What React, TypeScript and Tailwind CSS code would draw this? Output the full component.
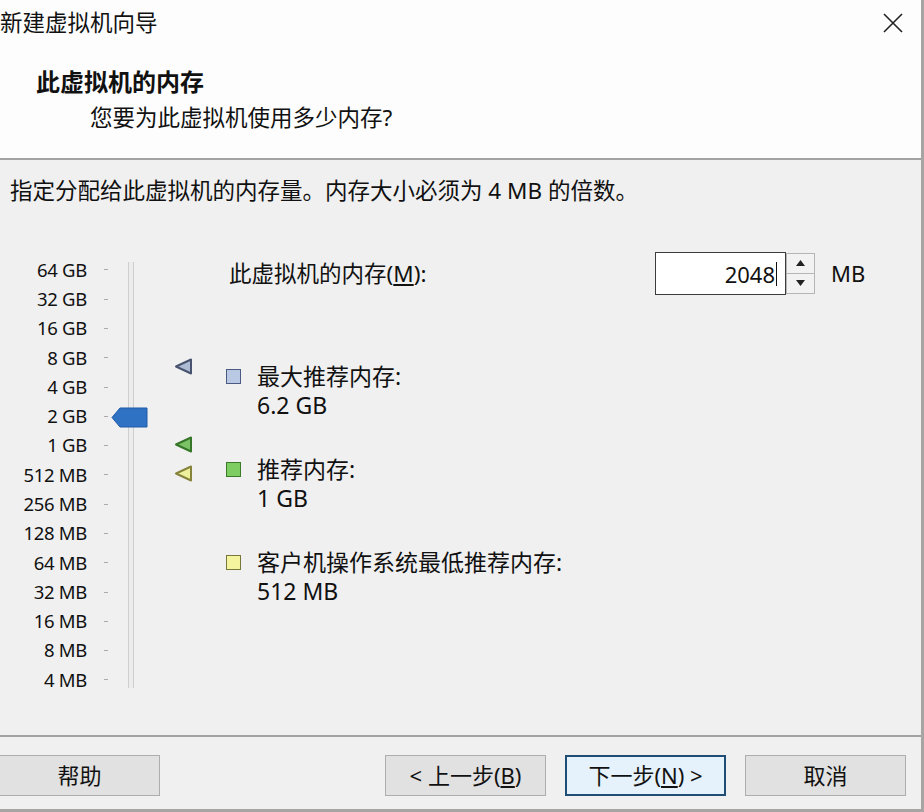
import React from 'react';

const FONT = { fontFamily: '"Noto Sans", "Noto Sans CJK SC", sans-serif' };

const scale = ['64 GB', '32 GB', '16 GB', '8 GB', '4 GB', '2 GB', '1 GB', '512 MB', '256 MB', '128 MB', '64 MB', '32 MB', '16 MB', '8 MB', '4 MB'];

const Marker: React.FC<{ fill: string; stroke: string; top: string }> = ({ fill, stroke, top }) => (
  <svg className={`absolute left-[174px] ${top}`} width="19" height="17" viewBox="0 0 19 17">
    <path d="M2 8.5 L17 1.5 L17 15.5 Z" fill={fill} stroke={stroke} strokeWidth="2" strokeLinejoin="round" />
  </svg>
);

const Legend: React.FC<{ square: string; label: string; value: string; className?: string }> = ({ square, label, value, className }) => (
  <div className={`flex ${className ?? ''}`}>
    <div className="w-[35px] pl-[4px] h-[29px] flex items-center">
      <div className={`w-[15px] h-[15px] border-[1.5px] ${square}`}></div>
    </div>
    <div className="text-[23px] leading-[29px] text-[#111]">
      <div>{label}</div>
      <div>{value}</div>
    </div>
  </div>
);

const Button: React.FC<{ children: React.ReactNode; primary?: boolean }> = ({ children, primary }) => (
  <button
    className={`w-[161px] h-[41px] flex items-center justify-center text-[22px] text-[#111] ${
      primary ? 'bg-[#e5f1fb] border-2 border-[#1f4d74]' : 'bg-[#e1e1e1] border border-[#adadad]'
    }`}
  >
    {children}
  </button>
);

export default function App() {
  return (
    <div style={FONT} className="w-[924px] h-[812px] flex flex-col bg-[#f0f0f0] border-r-[3px] border-b-[3px] border-[#a8a4a4] overflow-hidden text-[#111]">
      {/* header */}
      <div className="h-[160px] shrink-0 bg-[#fdfdfd] border-b-2 border-[#a2a2a2]">
        <div className="h-[46px] flex items-center justify-between">
          <span className="text-[22.5px] leading-none text-[#111]">新建虚拟机向导</span>
          <svg className="mr-[18px]" width="20" height="20" viewBox="0 0 20 20">
            <path d="M1 1 L19 19 M19 1 L1 19" stroke="#222" strokeWidth="1.6" />
          </svg>
        </div>
        <div className="mt-[21px] pl-[36px] text-[24px] leading-[30px] font-bold">此虚拟机的内存</div>
        <div className="mt-[6px] pl-[90px] text-[22.5px] leading-[30px] text-[#111]">您要为此虚拟机使用多少内存?</div>
      </div>

      {/* body */}
      <div className="flex-1 flex flex-col">
        <div className="pt-[16px] pl-[10px] text-[22.5px] leading-[30px] text-[#111]">
          指定分配给此虚拟机的内存量。内存大小必须为 4 MB 的倍数。
        </div>

        <div className="mt-[46px] flex">
          {/* slider */}
          <div className="relative w-[222px] h-[450px]">
            <div className="pt-[3.35px]">
              {scale.map((s) => (
                <div key={s} className="h-[29.29px] flex items-center">
                  <span className="w-[87px] text-right text-[18.5px] leading-none text-[#111] tracking-[-0.3px]">{s}</span>
                  <span className="ml-[17px] w-[4px] h-px bg-[#aaaaaa]"></span>
                </div>
              ))}
            </div>
            <div className="absolute left-[128px] top-[10px] h-[426px] w-[6px] border-x border-[#cfcfcf] bg-[#ececec]"></div>
            <svg className="absolute left-[111px] top-[155px]" width="37" height="21" viewBox="0 0 37 21">
              <path d="M1 10.5 L9 1 L36 1 L36 20 L9 20 Z" fill="#2f72c4" stroke="#1f5aa6" strokeWidth="1" />
            </svg>
            <Marker fill="#aebbd4" stroke="#47536f" top="top-[106px]" />
            <Marker fill="#7cc266" stroke="#367628" top="top-[184px]" />
            <Marker fill="#eef09c" stroke="#85843a" top="top-[213px]" />
          </div>

          {/* values */}
          <div className="flex-1 flex flex-col">
            <div className="h-[43px] flex items-center">
              <span className="w-[433px] pl-[7px] text-[22.5px] text-[#111]">
                此虚拟机的内存(<span className="underline underline-offset-2">M</span>):
              </span>
              <div className="w-[131px] h-[43px] bg-white border border-[#3c3c3c] flex items-center justify-end pr-[8px]">
                <span className="text-[22px] leading-none">2048</span>
                <span className="ml-[1px] w-px h-[24px] bg-[#111]"></span>
              </div>
              <div className="w-[29px] h-[41px] flex flex-col bg-white">
                <div className="h-1/2 flex items-center justify-center bg-[#f2f2f2] border border-[#b5b5b5]">
                  <svg width="9" height="6" viewBox="0 0 9 6"><path d="M0 6 L4.5 0 L9 6 Z" fill="#222" /></svg>
                </div>
                <div className="h-1/2 flex items-center justify-center bg-[#f2f2f2] border border-t-0 border-[#b5b5b5]">
                  <svg width="9" height="6" viewBox="0 0 9 6"><path d="M0 0 L9 0 L4.5 6 Z" fill="#222" /></svg>
                </div>
              </div>
              <span className="ml-[16px] text-[22px] text-[#111]">MB</span>
            </div>

            <Legend className="mt-[67px]" square="bg-[#b9c8e3] border-[#4a5a82]" label="最大推荐内存:" value="6.2 GB" />
            <Legend className="mt-[35px]" square="bg-[#7dcd63] border-[#3a7a28]" label="推荐内存:" value="1 GB" />
            <Legend className="mt-[35px]" square="bg-[#f4f49e] border-[#77773c]" label="客户机操作系统最低推荐内存:" value="512 MB" />
          </div>
        </div>
      </div>

      {/* footer */}
      <div className="h-[74px] shrink-0 border-t-2 border-[#a2a2a2] pt-[18px] flex items-start pr-[15px]">
        <div className="-ml-[1px]">
          <Button>帮助</Button>
        </div>
        <div className="ml-auto flex gap-[19px]">
          <Button>&lt; 上一步(<span className="underline underline-offset-2">B</span>)</Button>
          <Button primary>下一步(<span className="underline underline-offset-2">N</span>) &gt;</Button>
          <Button>取消</Button>
        </div>
      </div>
    </div>
  );
}
